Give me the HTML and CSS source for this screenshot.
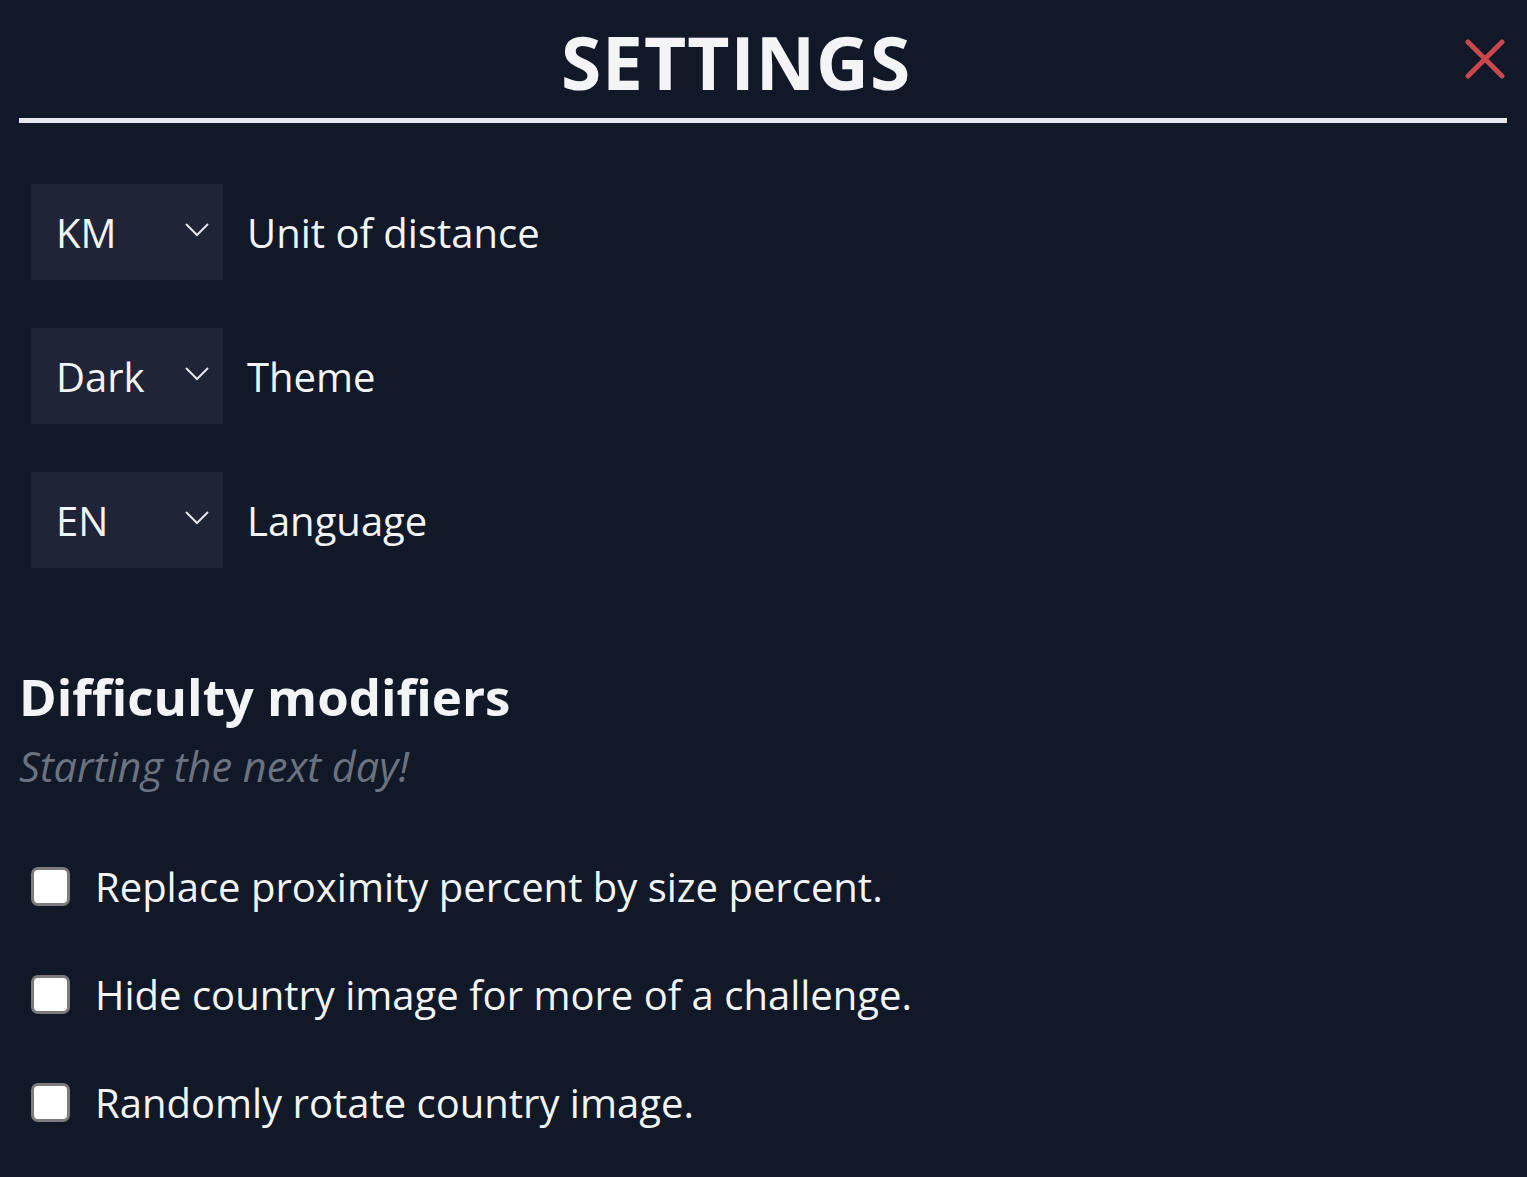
FILE: index.html
```html
<!DOCTYPE html>
<html lang="en">

<head>
    <meta charset="UTF-8">
    <meta name="viewport" content="width=device-width, initial-scale=1.0">
    <title>Settings</title>
    <link rel="stylesheet" href="styles.css">
</head>

<body>

    <div class="header">
        <h1 class="title">SETTINGS</h1>
        <button class="close" aria-label="Close">
            <svg viewBox="0 0 40 40" width="40" height="40">
                <path d="M3 3 L37 37 M37 3 L3 37" stroke="#c9484d" stroke-width="5" stroke-linecap="round" fill="none" />
            </svg>
        </button>
    </div>

    <div class="options">
        <div class="option">
            <div class="select">
                <span>KM</span>
                <svg class="chevron" viewBox="0 0 24 14" width="24" height="14">
                    <path d="M1 1 L12 12 L23 1" stroke="#e5e7eb" stroke-width="2" fill="none" />
                </svg>
            </div>
            <label class="label">Unit of distance</label>
        </div>
        <div class="option">
            <div class="select">
                <span>Dark</span>
                <svg class="chevron" viewBox="0 0 24 14" width="24" height="14">
                    <path d="M1 1 L12 12 L23 1" stroke="#e5e7eb" stroke-width="2" fill="none" />
                </svg>
            </div>
            <label class="label">Theme</label>
        </div>
        <div class="option">
            <div class="select">
                <span>EN</span>
                <svg class="chevron" viewBox="0 0 24 14" width="24" height="14">
                    <path d="M1 1 L12 12 L23 1" stroke="#e5e7eb" stroke-width="2" fill="none" />
                </svg>
            </div>
            <label class="label">Language</label>
        </div>
    </div>

    <div class="modifiers">
        <h2>Difficulty modifiers</h2>
        <p class="hint">Starting the next day!</p>

        <div class="check">
            <span class="box"></span>
            <label class="label">Replace proximity percent by size percent.</label>
        </div>
        <div class="check">
            <span class="box"></span>
            <label class="label">Hide country image for more of a challenge.</label>
        </div>
        <div class="check">
            <span class="box"></span>
            <label class="label">Randomly rotate country image.</label>
        </div>
    </div>

</body>

</html>
```

FILE: styles.css
```css
body {
  margin: 0;
  padding: 0 20px 0 19px;
  font-family: "Open Sans", "Noto Sans", sans-serif;
  color: #f3f4f6;
  background-color: #111827;
}

/* top bar */
.header {
  display: flex;
  align-items: center;
  height: 118px;
  border-bottom: 5px solid #e5e7eb;
}

.title {
  flex: 1;
  margin: 0;
  text-align: center;
  font-size: 73px;
  font-weight: 700;
  letter-spacing: 1px;
  padding-top: 4px;
}

.close {
  background: transparent;
  border: none;
  padding: 0;
  margin-right: 2px;
  width: 52px;
  height: 52px;
  display: flex;
  align-items: center;
  justify-content: flex-end;
}

/* dropdown rows */
.options {
  padding: 61px 0 0 12px;
  display: flex;
  flex-direction: column;
  gap: 48px;
}

.option {
  display: flex;
  align-items: center;
  gap: 24px;
}

.select {
  width: 192px;
  height: 96px;
  box-sizing: border-box;
  padding: 0 14px 0 25px;
  background: #1f2536;
  display: flex;
  align-items: center;
  justify-content: space-between;
  font-size: 40px;
}

.chevron {
  margin-top: -4px;
}

.label {
  font-size: 40px;
}

/* difficulty section */
.modifiers {
  padding-top: 88px;
}

.modifiers h2 {
  margin: 0;
  font-size: 51px;
  font-weight: 700;
  line-height: 80px;
}

.hint {
  margin: 0;
  font-style: italic;
  font-size: 41.5px;
  line-height: 60px;
  color: #6b7280;
}

.check {
  display: flex;
  align-items: center;
  gap: 25px;
  margin: 0 0 0 12px;
  height: 108px;
}

.modifiers .hint {
  margin-bottom: 36px;
}

.box {
  width: 39px;
  height: 39px;
  box-sizing: border-box;
  background: #ffffff;
  border: 3px solid #7b7b7b;
  border-radius: 7px;
}
```
